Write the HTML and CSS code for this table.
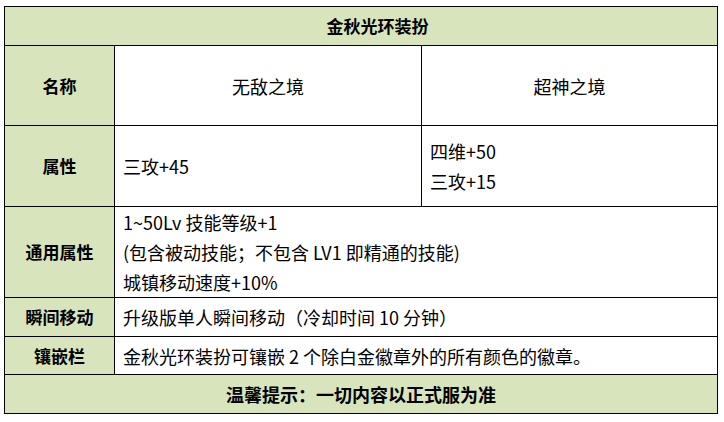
FILE: index.html
```html
<!DOCTYPE html>
<html lang="zh-CN">
<head>
<meta charset="utf-8">
<title>金秋光环装扮</title>
<link rel="stylesheet" href="styles.css">
</head>
<body>
<table class="sheet">
  <colgroup>
    <col class="c-label">
    <col class="c-a">
    <col class="c-b">
  </colgroup>
  <tr class="r-title">
    <td class="head title" colspan="3">金秋光环装扮</td>
  </tr>
  <tr class="r-name">
    <td class="label">名称</td>
    <td class="center">无敌之境</td>
    <td class="center">超神之境</td>
  </tr>
  <tr class="r-attr">
    <td class="label">属性</td>
    <td class="text">三攻+45</td>
    <td class="text">四维+50<br>三攻+15</td>
  </tr>
  <tr class="r-common">
    <td class="label">通用属性</td>
    <td class="text" colspan="2">1~50Lv 技能等级+1<br>(包含被动技能；不包含 LV1 即精通的技能)<br>城镇移动速度+10%</td>
  </tr>
  <tr class="r-tele">
    <td class="label">瞬间移动</td>
    <td class="text" colspan="2">升级版单人瞬间移动（冷却时间 10 分钟）</td>
  </tr>
  <tr class="r-socket">
    <td class="label">镶嵌栏</td>
    <td class="text" colspan="2">金秋光环装扮可镶嵌 2 个除白金徽章外的所有颜色的徽章。</td>
  </tr>
  <tr class="r-tip">
    <td class="head tip" colspan="3">温馨提示：一切内容以正式服为准</td>
  </tr>
</table>
</body>
</html>
```
FILE: styles.css
```css
html, body {
  margin: 0;
  padding: 0;
  background: #ffffff;
}
body {
  padding: 6px 0 0 4px;
  font-family: "Noto Sans CJK SC", "Noto Sans", sans-serif;
  color: #000000;
}
.sheet {
  border-collapse: collapse;
  table-layout: fixed;
  width: 713px;
}
.c-label { width: 110px; }
.c-a { width: 307px; }
.c-b { width: 296px; }
.sheet td {
  border: 1px solid #000000;
  padding: 0;
  vertical-align: middle;
  font-size: 18px;
  line-height: 30px;
}
.sheet td.head {
  background: #d7e4bc;
  text-align: center;
  font-weight: bold;
}
.sheet td.title {
  font-size: 17px;
  padding-left: 33px;
}
.sheet td.tip {
  font-size: 18px;
}
.sheet td.label {
  background: #d7e4bc;
  text-align: center;
  font-weight: bold;
  font-size: 17px;
}
.center { text-align: center; }
.sheet td.text {
  text-align: left;
  padding-left: 8px;
}
.r-title { height: 39px; }
.r-name { height: 80px; }
.r-attr { height: 81px; }
.r-common { height: 91px; }
.r-tele { height: 39px; }
.r-socket { height: 38px; }
.r-tip { height: 39px; }
```
